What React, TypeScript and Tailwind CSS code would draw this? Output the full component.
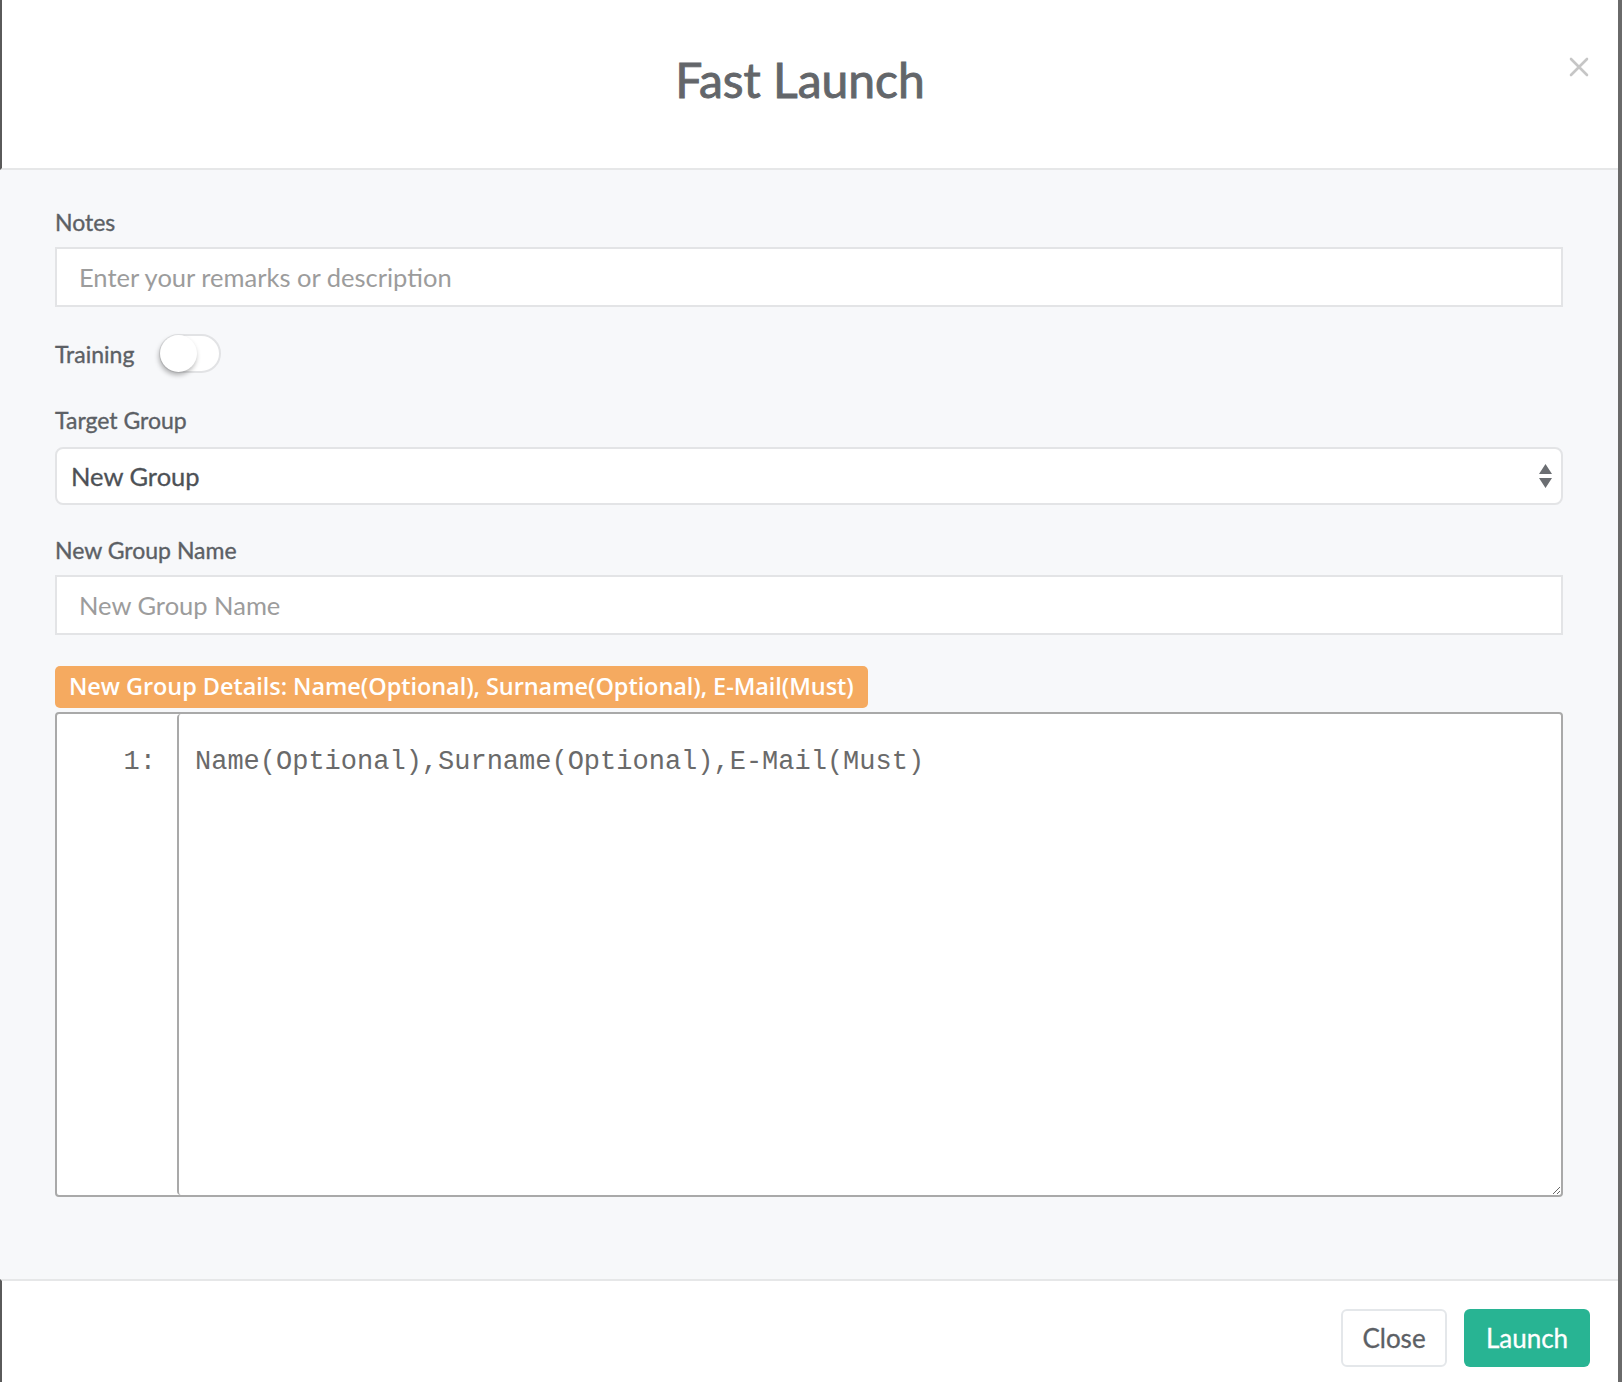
import React from "react";

const font = { fontFamily: "Lato, 'Open Sans', sans-serif" };
const mono = { fontFamily: "'Courier New', Courier, 'Liberation Mono', monospace" };

const Label = ({ children }: { children: React.ReactNode }) => (
  <div className="text-[23px] leading-[32px] text-[#5c6065] [-webkit-text-stroke:0.35px]">{children}</div>
);

const TextInput = ({ placeholder }: { placeholder: string }) => (
  <input
    placeholder={placeholder}
    className="h-[60px] w-full border-2 border-[#e3e4e6] bg-white px-[22px] text-[25.5px] text-[#555] outline-none placeholder:text-[#9c9c9c]"
  />
);

const App: React.FC = () => {
  return (
    <div className="flex h-[1382px] w-[1622px] overflow-hidden bg-white" style={font}>
      <div className="flex w-[1618px] flex-col">
        {/* header */}
        <div className="relative flex h-[170px] items-center border-b-2 border-l-2 border-b-[#e6e7e8] border-l-[#5a5a5a] pb-[8px] pr-[20px]">
          <h1 className="flex-1 text-center text-[48px] leading-[48px] font-normal text-[#63666a] [-webkit-text-stroke:0.9px]">
            Fast Launch
          </h1>
          <button className="absolute right-[29px] top-[57px] flex h-[20px] w-[20px] items-center justify-center">
            <svg width="20" height="20" viewBox="0 0 20 20">
              <path d="M2 2 L18 18 M18 2 L2 18" stroke="#c6c6c6" strokeWidth="2.6" strokeLinecap="round" />
            </svg>
          </button>
        </div>

        {/* body */}
        <div className="flex flex-1 flex-col bg-[#f7f8fa] px-[55px] pt-[36px]">
          <Label>Notes</Label>
          <div className="mt-[9px]">
            <TextInput placeholder="Enter your remarks or description" />
          </div>

          <div className="mt-[27px] flex items-center gap-[25px]">
            <Label>Training</Label>
            <div className="flex h-[39px] w-[62px] items-center rounded-full border-2 border-[#e2e3e5] bg-white">
              <div className="ml-[-1px] h-[37px] w-[37px] rounded-full bg-white shadow-[-1px_3px_5px_rgba(0,0,0,0.3)]" />
            </div>
          </div>

          <div className="mt-[31px]">
            <Label>Target Group</Label>
          </div>
          <div className="mt-[11px] flex h-[58px] items-center justify-between rounded-[8px] border-2 border-[#e3e4e6] bg-white pl-[14px] pr-[9px]">
            <span className="text-[25.5px] text-[#4d5156] [-webkit-text-stroke:0.3px]">New Group</span>
            <svg width="13" height="24" viewBox="0 0 13 24">
              <path d="M6.5 0 L13 10 L0 10 Z M0 14 L13 14 L6.5 24 Z" fill="#6b6e72" />
            </svg>
          </div>

          <div className="mt-[29px]">
            <Label>New Group Name</Label>
          </div>
          <div className="mt-[9px]">
            <TextInput placeholder="New Group Name" />
          </div>

          <div className="mt-[31px] flex">
            <div
              className="flex h-[42px] items-center rounded-[5px] bg-[#f5aa60] px-[14px] text-[23.5px] font-semibold tracking-[-0.06px] text-white"
              style={{ fontFamily: "'Open Sans', sans-serif" }}
            >
              New Group Details: Name(Optional), Surname(Optional), E-Mail(Must)
            </div>
          </div>

          <div className="mt-[4px] flex h-[485px] rounded-[4px] border-2 border-[#a9a9a9] bg-white">
            <div
              className="w-[120px] shrink-0 pr-[21px] pt-[32px] text-right text-[27px] leading-[32px] text-[#6a6a6a]"
              style={mono}
            >
              1:
            </div>
            <textarea
              defaultValue="Name(Optional),Surname(Optional),E-Mail(Must)"
              spellCheck={false}
              className="h-full flex-1 rounded-[4px] border-l-2 border-[#a9a9a9] bg-white pl-[16px] pt-[32px] text-[27px] leading-[32px] text-[#6a6a6a] outline-none"
              style={mono}
            />
          </div>
        </div>

        {/* footer */}
        <div className="flex h-[103px] items-center justify-end gap-[17px] border-l-2 border-t-2 border-l-[#5a5a5a] border-t-[#e6e7e8] pr-[28px] pt-[13px]">
          <button className="h-[58px] w-[106px] rounded-[6px] border-2 border-[#e4e7ea] bg-white text-[26px] text-[#5c6065] [-webkit-text-stroke:0.3px]">
            Close
          </button>
          <button className="h-[58px] w-[126px] rounded-[6px] bg-[#28b493] text-[26px] text-white [-webkit-text-stroke:0.3px]">
            Launch
          </button>
        </div>
      </div>
      <div className="w-[4px] bg-[#6a6a6a]" />
    </div>
  );
};

export default App;
